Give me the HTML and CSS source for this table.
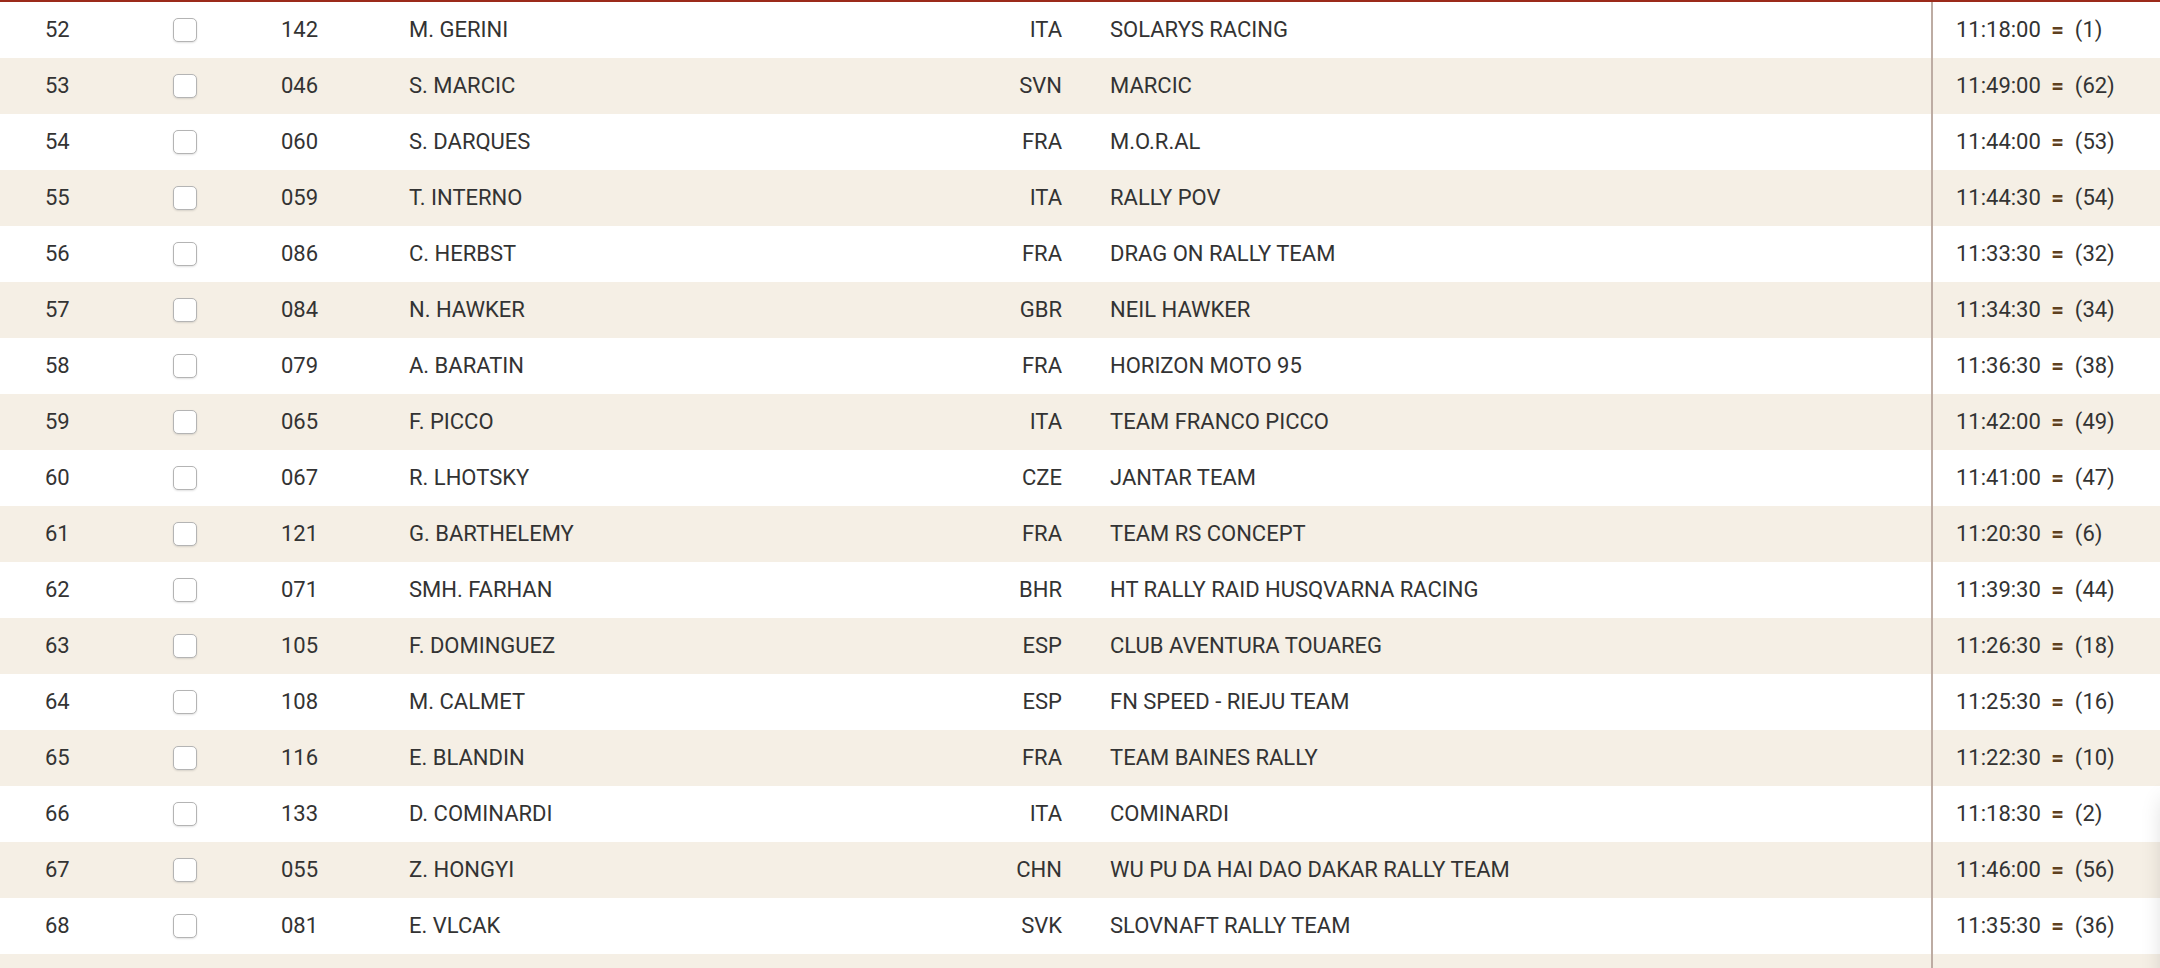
FILE: index.html
```html
<!DOCTYPE html>
<html lang="en">
<head>
<meta charset="utf-8">
<title>Classement</title>
<link rel="stylesheet" href="styles.css">
</head>
<body>
<div class="results">
  <div class="row"><span class="c-rank">52</span><span class="c-check"><span class="box"></span></span><span class="c-bib">142</span><span class="c-name">M. GERINI</span><span class="c-nat">ITA</span><span class="c-team">SOLARYS RACING</span><span class="c-time">11:18:00 <span class="eq">=</span>&nbsp; (1)</span></div>
  <div class="row"><span class="c-rank">53</span><span class="c-check"><span class="box"></span></span><span class="c-bib">046</span><span class="c-name">S. MARCIC</span><span class="c-nat">SVN</span><span class="c-team">MARCIC</span><span class="c-time">11:49:00 <span class="eq">=</span>&nbsp; (62)</span></div>
  <div class="row"><span class="c-rank">54</span><span class="c-check"><span class="box"></span></span><span class="c-bib">060</span><span class="c-name">S. DARQUES</span><span class="c-nat">FRA</span><span class="c-team">M.O.R.AL</span><span class="c-time">11:44:00 <span class="eq">=</span>&nbsp; (53)</span></div>
  <div class="row"><span class="c-rank">55</span><span class="c-check"><span class="box"></span></span><span class="c-bib">059</span><span class="c-name">T. INTERNO</span><span class="c-nat">ITA</span><span class="c-team">RALLY POV</span><span class="c-time">11:44:30 <span class="eq">=</span>&nbsp; (54)</span></div>
  <div class="row"><span class="c-rank">56</span><span class="c-check"><span class="box"></span></span><span class="c-bib">086</span><span class="c-name">C. HERBST</span><span class="c-nat">FRA</span><span class="c-team">DRAG ON RALLY TEAM</span><span class="c-time">11:33:30 <span class="eq">=</span>&nbsp; (32)</span></div>
  <div class="row"><span class="c-rank">57</span><span class="c-check"><span class="box"></span></span><span class="c-bib">084</span><span class="c-name">N. HAWKER</span><span class="c-nat">GBR</span><span class="c-team">NEIL HAWKER</span><span class="c-time">11:34:30 <span class="eq">=</span>&nbsp; (34)</span></div>
  <div class="row"><span class="c-rank">58</span><span class="c-check"><span class="box"></span></span><span class="c-bib">079</span><span class="c-name">A. BARATIN</span><span class="c-nat">FRA</span><span class="c-team">HORIZON MOTO 95</span><span class="c-time">11:36:30 <span class="eq">=</span>&nbsp; (38)</span></div>
  <div class="row"><span class="c-rank">59</span><span class="c-check"><span class="box"></span></span><span class="c-bib">065</span><span class="c-name">F. PICCO</span><span class="c-nat">ITA</span><span class="c-team">TEAM FRANCO PICCO</span><span class="c-time">11:42:00 <span class="eq">=</span>&nbsp; (49)</span></div>
  <div class="row"><span class="c-rank">60</span><span class="c-check"><span class="box"></span></span><span class="c-bib">067</span><span class="c-name">R. LHOTSKY</span><span class="c-nat">CZE</span><span class="c-team">JANTAR TEAM</span><span class="c-time">11:41:00 <span class="eq">=</span>&nbsp; (47)</span></div>
  <div class="row"><span class="c-rank">61</span><span class="c-check"><span class="box"></span></span><span class="c-bib">121</span><span class="c-name">G. BARTHELEMY</span><span class="c-nat">FRA</span><span class="c-team">TEAM RS CONCEPT</span><span class="c-time">11:20:30 <span class="eq">=</span>&nbsp; (6)</span></div>
  <div class="row"><span class="c-rank">62</span><span class="c-check"><span class="box"></span></span><span class="c-bib">071</span><span class="c-name">SMH. FARHAN</span><span class="c-nat">BHR</span><span class="c-team">HT RALLY RAID HUSQVARNA RACING</span><span class="c-time">11:39:30 <span class="eq">=</span>&nbsp; (44)</span></div>
  <div class="row"><span class="c-rank">63</span><span class="c-check"><span class="box"></span></span><span class="c-bib">105</span><span class="c-name">F. DOMINGUEZ</span><span class="c-nat">ESP</span><span class="c-team">CLUB AVENTURA TOUAREG</span><span class="c-time">11:26:30 <span class="eq">=</span>&nbsp; (18)</span></div>
  <div class="row"><span class="c-rank">64</span><span class="c-check"><span class="box"></span></span><span class="c-bib">108</span><span class="c-name">M. CALMET</span><span class="c-nat">ESP</span><span class="c-team">FN SPEED - RIEJU TEAM</span><span class="c-time">11:25:30 <span class="eq">=</span>&nbsp; (16)</span></div>
  <div class="row"><span class="c-rank">65</span><span class="c-check"><span class="box"></span></span><span class="c-bib">116</span><span class="c-name">E. BLANDIN</span><span class="c-nat">FRA</span><span class="c-team">TEAM BAINES RALLY</span><span class="c-time">11:22:30 <span class="eq">=</span>&nbsp; (10)</span></div>
  <div class="row"><span class="c-rank">66</span><span class="c-check"><span class="box"></span></span><span class="c-bib">133</span><span class="c-name">D. COMINARDI</span><span class="c-nat">ITA</span><span class="c-team">COMINARDI</span><span class="c-time">11:18:30 <span class="eq">=</span>&nbsp; (2)</span></div>
  <div class="row"><span class="c-rank">67</span><span class="c-check"><span class="box"></span></span><span class="c-bib">055</span><span class="c-name">Z. HONGYI</span><span class="c-nat">CHN</span><span class="c-team">WU PU DA HAI DAO DAKAR RALLY TEAM</span><span class="c-time">11:46:00 <span class="eq">=</span>&nbsp; (56)</span></div>
  <div class="row"><span class="c-rank">68</span><span class="c-check"><span class="box"></span></span><span class="c-bib">081</span><span class="c-name">E. VLCAK</span><span class="c-nat">SVK</span><span class="c-team">SLOVNAFT RALLY TEAM</span><span class="c-time">11:35:30 <span class="eq">=</span>&nbsp; (36)</span></div>
  <div class="row"><span class="c-rank"></span><span class="c-check"></span><span class="c-bib"></span><span class="c-name"></span><span class="c-nat"></span><span class="c-team"></span><span class="c-time"></span></div>
</div>
<div class="side-shadow"></div>
</body>
</html>
```

FILE: styles.css
```css
html, body {
  margin: 0;
  padding: 0;
  background: #ffffff;
  overflow: hidden;
}

body {
  font-family: Roboto, "Liberation Sans", sans-serif;
  font-size: 22px;
  color: #333333;
}

.results {
  border-top: 2px solid #9b2a1a;
}

.row {
  display: grid;
  grid-template-columns: 173px 108px 128px 541px 112px 869px 1fr;
  height: 56px;
  line-height: 56px;
  white-space: nowrap;
}

.row:nth-child(even) {
  background: #f5efe5;
}

.c-rank {
  padding-left: 45px;
}

.c-check {
  display: flex;
  align-items: center;
}

.box {
  display: block;
  width: 22px;
  height: 22px;
  border: 1px solid #b4b4b4;
  border-radius: 5px;
  background: #ffffff;
  box-shadow: 0 1px 2px rgba(0, 0, 0, 0.12);
}

.c-nat {
  text-align: right;
}

.c-team {
  padding-left: 48px;
}

.c-time {
  border-left: 2px solid #bdaca3;
  padding-left: 23px;
}

.eq {
  color: #5f4020;
  font-weight: 700;
  margin-left: 5px;
}

.side-shadow {
  position: fixed;
  left: 2164px;
  top: 800px;
  width: 200px;
  height: 400px;
  box-shadow: 0 0 22px rgba(0, 0, 0, 0.16);
}
```
